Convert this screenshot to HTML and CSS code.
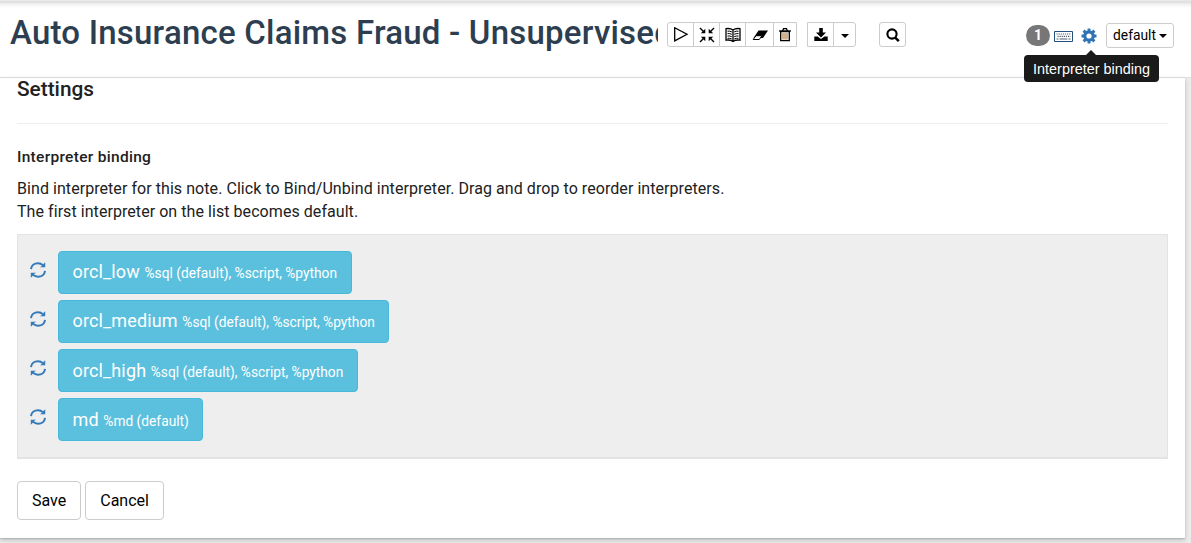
FILE: index.html
```html
<!DOCTYPE html>
<html lang="en">
<head>
<meta charset="utf-8">
<title>Interpreter binding</title>
<link rel="stylesheet" href="styles.css">
</head>
<body>
<svg class="defs" width="0" height="0" aria-hidden="true">
  <symbol id="refresh" viewBox="0 0 16 16">
    <path d="M1 7.200C1.300 3.500 4.400 1.300 8 1.300c2 0 3.700.8 5 2.100M15 8.800C14.700 12.500 11.600 14.700 8 14.700c-2 0-3.700-.8-5-2.100" fill="none" stroke="currentColor" stroke-width="2"/>
    <path d="M15.200.3v5H9.800L12 4l1.600-2.200zM.8 15.700v-5h5.400L4 12l-1.600 2.200z" fill="currentColor"/>
  </symbol>
</svg>
<header class="header">
  <h1 class="title">Auto Insurance Claims Fraud - Unsupervised</h1>
  <div class="toolbar">
    <div class="group group-run">
      <button class="tool"><svg width="16" height="16" viewBox="0 0 16 16"><path d="M1.700.8v13L14 7.300z" fill="none" stroke="#000" stroke-width="1.300"/></svg></button>
      <button class="tool"><svg width="16" height="16" viewBox="0 0 16 16"><path d="M1 1l4 4M15 1l-4 4M1 15l4-4M15 15l-4-4" stroke="#000" stroke-width="1.400"/><path d="M6.300 1.800v4.500H1.800zM9.700 1.800v4.500h4.500zM6.300 14.200V9.700H1.800zM9.700 14.200V9.700h4.500z"/></svg></button>
      <button class="tool"><svg width="16" height="16" viewBox="0 0 16 16"><path d="M8 3C6 1.500 3.500 1.300 1 1.700v11.500c2.500-.4 5-.2 7 1.300 2-1.500 4.500-1.700 7-1.300V1.700C12.500 1.300 10 1.500 8 3zM8 3v11" fill="none" stroke="#000" stroke-width="1.300"/><path d="M2.500 4.200c1.500-.2 3 0 4.300.7M2.500 6.600c1.500-.2 3 0 4.300.7M2.500 9c1.500-.2 3 0 4.300.7M2.500 11.300c1.500-.2 3 0 4.300.7M13.500 4.200c-1.500-.2-3 0-4.300.7M13.500 6.600c-1.500-.2-3 0-4.300.7M13.500 9c-1.500-.2-3 0-4.300.7M13.500 11.300c-1.500-.2-3 0-4.300.7" fill="none" stroke="#000"/></svg></button>
      <button class="tool tool-clear"><svg width="16" height="16" viewBox="0 0 16 16"><path d="M6.500 3.500h9.500l-5 7.500H1.500z"/><path d="M1.200 12.500L4 8.700h6l-2.700 3.800z" fill="#fff" stroke="#000"/></svg></button>
      <button class="tool"><svg width="14" height="16" viewBox="0 0 14 16"><path d="M2.700 4.500h8.600v9.200H2.700zM4.700 3.700l.8-2h3l.8 2" fill="#fff" stroke="#000" stroke-width="1.300"/><path d="M1 4h12" stroke="#000" stroke-width="1.300"/><path d="M5 6v6.500M7 6v6.500M9 6v6.500" stroke="#a96018" stroke-width="1"/></svg></button>
    </div>
    <div class="group group-download">
      <button class="tool"><svg width="14" height="16" viewBox="0 0 14 16"><path d="M5.200 1h3.600v4.500H12L7 10.500 2 5.500h3.200z"/><path d="M.3 9.500h3.300L7 12l3.400-2.500h3.300V14H.3z"/></svg></button>
      <button class="tool tool-caret"><span class="caret"></span></button>
    </div>
    <div class="group group-search">
      <button class="tool"><svg width="14" height="16" viewBox="0 0 14 16"><circle cx="6" cy="7" r="4.600" fill="none" stroke="#000" stroke-width="2.100"/><path d="M9 10.300l3.800 3.800" stroke="#000" stroke-width="2.500"/></svg></button>
    </div>
  </div>
  <div class="controls">
    <span class="badge">1</span>
    <svg class="keyboard" width="19" height="13" viewBox="0 0 19 13"><path d="M.5 1.500h18v10H.5z" fill="#fff" stroke="#234f78"/><path d="M2.500 4h14M3.500 6.400h13" stroke="#4d5f6e" stroke-width="1.200" stroke-dasharray="1.200 .9"/><path d="M2.500 9h2M5.500 9h8M14.500 9h2" stroke="#4d5f6e" stroke-width="1.200"/></svg>
    <span class="gear-wrap">
      <svg class="gear" width="16" height="16" viewBox="0 0 16 16"><circle cx="8" cy="8" r="4.200" fill="none" stroke="#2f74b5" stroke-width="3.200"/><path d="M8 .5v3M8 12.500v3M.5 8h3M12.500 8h3M2.600 2.600l2 2M11.400 11.400l2 2M13.400 2.600l-2 2M4.600 11.400l-2 2" stroke="#2f74b5" stroke-width="2.900"/></svg>
      <span class="tooltip">Interpreter binding</span>
    </span>
    <button class="mode">default<span class="caret"></span></button>
  </div>
</header>
<main class="panel">
  <h2 class="heading">Settings</h2>
  <hr class="rule">
  <h3 class="subheading">Interpreter binding</h3>
  <p class="text">Bind interpreter for this note. Click to Bind/Unbind interpreter. Drag and drop to reorder interpreters.<br>The first interpreter on the list becomes default.</p>
  <div class="bindings">
    <div class="binding"><svg class="refresh"><use href="#refresh"/></svg><button class="interpreter">orcl_low <small>%sql (default), %script, %python</small></button></div>
    <div class="binding"><svg class="refresh"><use href="#refresh"/></svg><button class="interpreter">orcl_medium <small>%sql (default), %script, %python</small></button></div>
    <div class="binding"><svg class="refresh"><use href="#refresh"/></svg><button class="interpreter">orcl_high <small>%sql (default), %script, %python</small></button></div>
    <div class="binding"><svg class="refresh"><use href="#refresh"/></svg><button class="interpreter">md <small>%md (default)</small></button></div>
  </div>
  <div class="actions"><button class="action">Save</button><button class="action">Cancel</button></div>
</main>
</body>
</html>
```
FILE: styles.css
```css
* { box-sizing: border-box; }
body {
  margin: 0;
  height: 543px;
  overflow: hidden;
  background: #ececec;
  color: #212121;
  font-family: Roboto, "Liberation Sans", sans-serif;
  font-size: 16px;
}
button { font-family: inherit; margin: 0; white-space: nowrap; }
.defs { display: none; }
.header {
  display: flex;
  align-items: flex-start;
  height: 78px;
  padding-left: 10px;
  background: linear-gradient(#eee 0, #ddd 2px, #f1f1f1 4px, #fff 8px);
  border-bottom: 1px solid #e0e0e0;
}
.title {
  width: 648px;
  margin: 11px 0 0;
  overflow: hidden;
  white-space: nowrap;
  color: #2c3e50;
  font-size: 33px;
  letter-spacing: .22px;
  line-height: 44px;
  font-weight: 500;
}
.toolbar { display: flex; margin: 22px 0 0 9px; }
.group {
  display: flex;
  height: 25px;
  border: 1px solid #ccc;
  border-radius: 3px;
  background: #fff;
}
.group-run { border-radius: 3px 0 0 3px; }
.group-download { margin-left: 10px; border-radius: 0 3px 3px 0; }
.group-search { margin-left: 23px; }
.tool {
  display: flex;
  align-items: center;
  justify-content: center;
  width: 26px;
  padding: 0;
  border: 0;
  border-right: 1px solid #ccc;
  background: none;
}
.tool-clear { width: 28px; }
.tool:last-child { width: 25px; border-right: 0; }
.group-run .tool:last-child { width: 22px; }
.group-download .tool-caret { width: 21px; }
.caret {
  display: inline-block;
  border: 4px solid transparent;
  border-top-color: #000;
  border-bottom: 0;
}
.tool .caret { margin-top: 2px; }
.mode .caret { margin-top: 2px; }
.controls { display: flex; margin: 23px 17px 0 auto; }
.badge {
  width: 24px;
  height: 21px;
  margin-top: 2px;
  border-radius: 11px;
  background: #777;
  color: #fff;
  font-size: 14px;
  line-height: 21px;
  font-weight: 700;
  text-align: center;
}
.keyboard { margin: 7px 0 0 4px; }
.gear-wrap { position: relative; height: 16px; margin: 5px 0 0 8px; }
.gear { display: block; }
.tooltip {
  position: absolute;
  z-index: 1;
  top: 27px;
  left: -57px;
  width: 135px;
  height: 27px;
  border-radius: 4px;
  background: #1a1a1a;
  color: #fff;
  font: 14.400px/29px "Liberation Sans", sans-serif;
  text-align: center;
  white-space: nowrap;
}
.tooltip::before {
  content: "";
  position: absolute;
  top: -5px;
  left: 62px;
  border: 5px solid transparent;
  border-top: 0;
  border-bottom-color: #1a1a1a;
}
.mode {
  display: flex;
  align-items: center;
  justify-content: center;
  gap: 3px;
  width: 68px;
  height: 25px;
  margin-left: 9px;
  padding: 0 0 1px;
  border: 1px solid #ccc;
  border-radius: 3px;
  background: #fff;
  color: #000;
  font-size: 13.800px;
}
.panel {
  width: 1185px;
  height: 460px;
  padding: 0 17px;
  background: #fff;
  box-shadow: 0 2px 5px rgba(0, 0, 0, .2), 0 1px 1px rgba(0, 0, 0, .1);
}
.heading { margin: 0; font-size: 20.800px; line-height: 23px; font-weight: 500; }
.rule { margin: 22px 0 0; border: 0; border-top: 1px solid #eee; }
.subheading {
  margin: 22px 0 0;
  font-size: 15.500px;
  letter-spacing: .3px;
  line-height: 22px;
  font-weight: 500;
}
.text { margin: 9px 0 0; font-size: 16px; letter-spacing: .06px; line-height: 23px; }
.bindings {
  display: flex;
  flex-direction: column;
  gap: 6.700px;
  height: 225px;
  margin-top: 11px;
  padding: 16.200px 12px;
  border: 1px solid #e3e3e3;
  border-bottom-width: 2px;
  background: #eee;
}
.binding { display: flex; height: 42.400px; flex-shrink: 0; }
.refresh { width: 16px; height: 16px; margin: 10.600px 12px 0 0; color: #337ab7; }
.interpreter {
  height: 100%;
  padding: 0 13.500px 1px;
  border: 1px solid #46b8da;
  border-radius: 4px;
  background: #5bc0de;
  color: #fff;
  font-size: 18px;
  letter-spacing: .14px;
}
.interpreter small { font-size: 13.750px; letter-spacing: 0; }
.actions { display: flex; gap: 4px; margin-top: 22px; }
.action {
  height: 39px;
  padding: 0 14px;
  border: 1px solid #ccc;
  border-radius: 4px;
  background: #fff;
  color: #000;
  font-size: 16px;
}
```
